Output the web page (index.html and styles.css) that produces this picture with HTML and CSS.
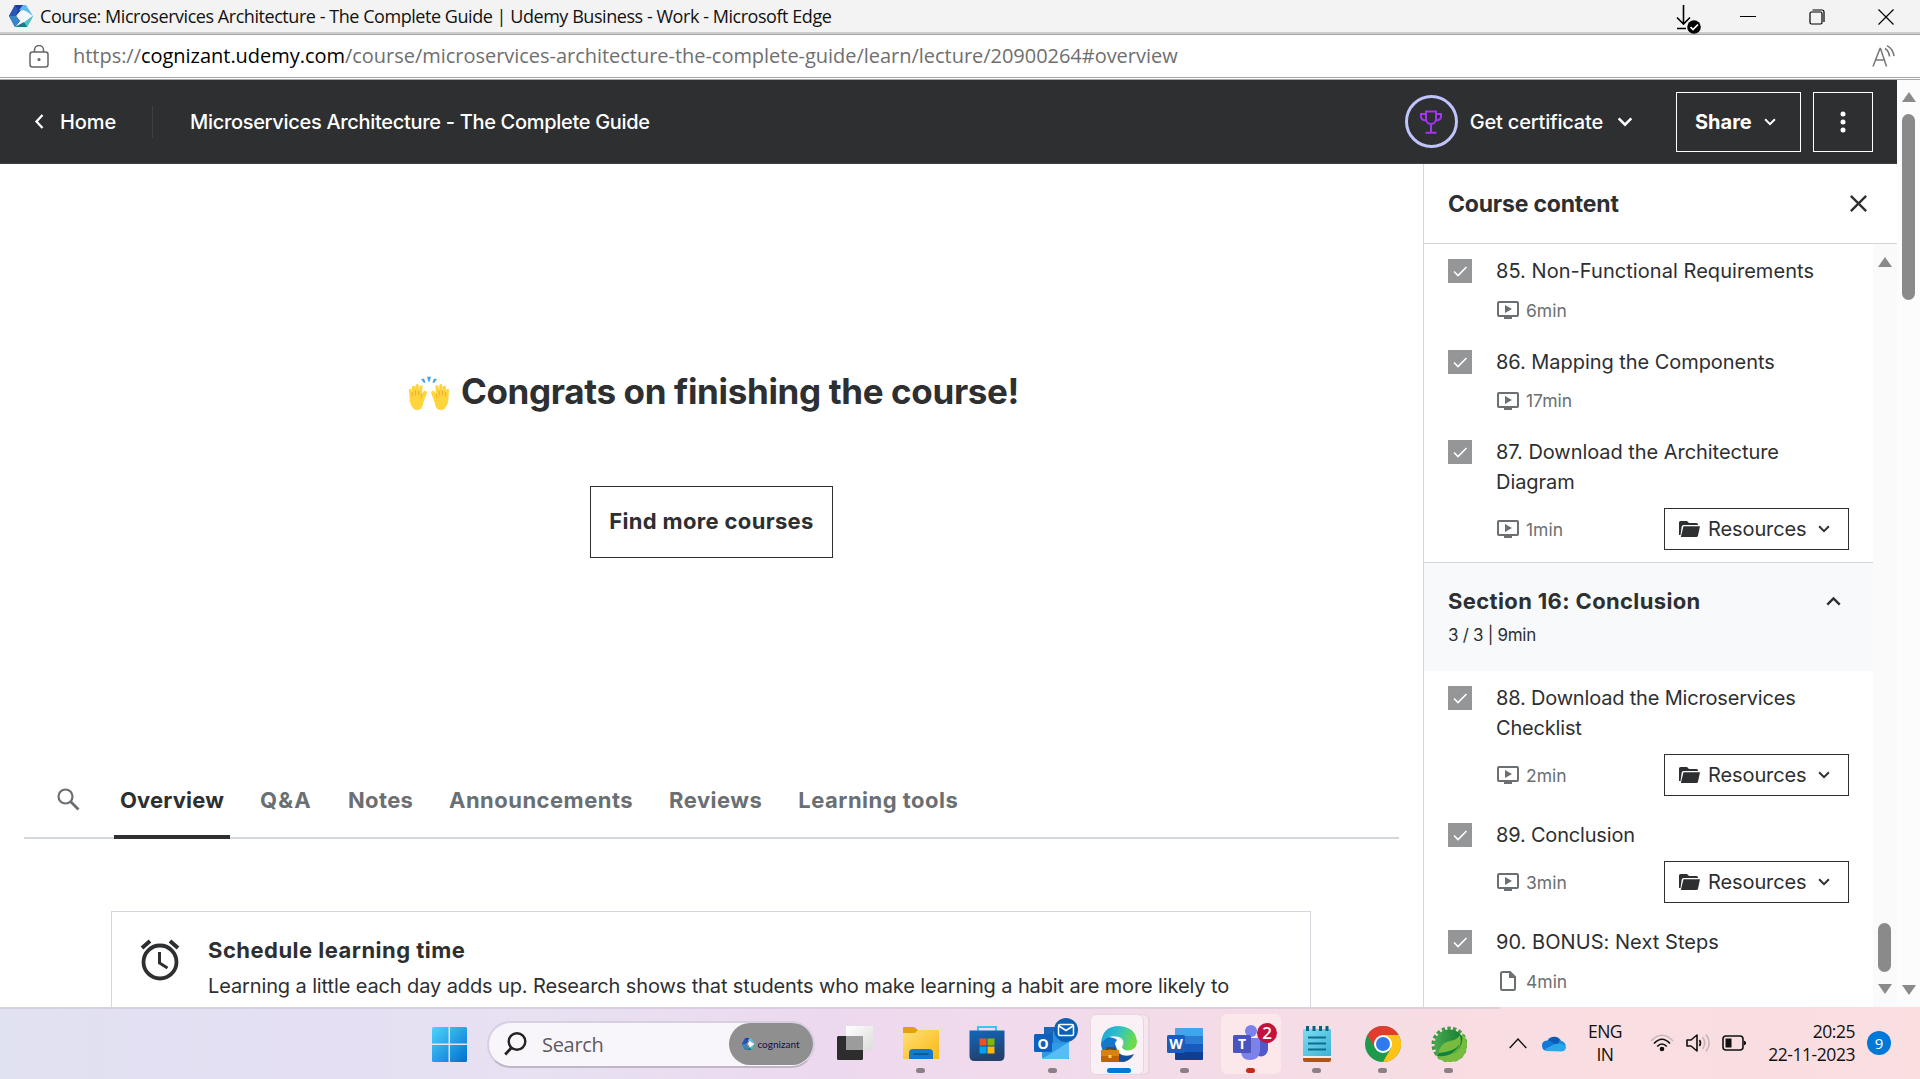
FILE: index.html
```html
<!DOCTYPE html>
<html lang="en">
<head>
<meta charset="utf-8">
<title>Course: Microservices Architecture - The Complete Guide | Udemy Business</title>
<link rel="stylesheet" href="styles.css">
</head>
<body>
<svg class="defs" width="0" height="0">
  <defs>
    <linearGradient id="winG" x1="0" y1="0" x2="1" y2="1"><stop offset="0" stop-color="#4fd3fc"/><stop offset="1" stop-color="#0070cf"/></linearGradient>
    <linearGradient id="folderG" x1="0" y1="0" x2="1" y2="1"><stop offset="0" stop-color="#ffe07a"/><stop offset="1" stop-color="#f9b80e"/></linearGradient>
    <linearGradient id="storeG" x1="0" y1="0" x2="0.3" y2="1"><stop offset="0" stop-color="#1068bd"/><stop offset="1" stop-color="#24406c"/></linearGradient>
    <linearGradient id="edgeTop" x1="0" y1="0" x2="1" y2="0.3"><stop offset="0" stop-color="#1ba0da"/><stop offset=".5" stop-color="#2fc0c8"/><stop offset="1" stop-color="#6cdc4c"/></linearGradient>
    <linearGradient id="springG" x1="0" y1="0" x2="1" y2="0"><stop offset="0" stop-color="#4ba84f"/><stop offset="1" stop-color="#0f7a2e"/></linearGradient>
    <linearGradient id="viewG" x1="0" y1="0" x2="1" y2="1"><stop offset="0" stop-color="#fff"/><stop offset="1" stop-color="#dcdcdc"/></linearGradient>
    <linearGradient id="padG" x1="0" y1="0" x2="1" y2="1"><stop offset="0" stop-color="#7ddcf2"/><stop offset="1" stop-color="#3fb2d2"/></linearGradient>
    <symbol id="play" viewBox="0 0 22 18"><rect x="1" y="1" width="20" height="14" rx="1" fill="none" stroke="#6a6f73" stroke-width="2"/><path d="M8 4v8l7-4zM7 15h8v3H7z" fill="#6a6f73"/></symbol>
    <symbol id="file" viewBox="0 0 16 20"><path d="M2.500 1h7.500l5 5v11.500a1.500 1.500 0 0 1-1.500 1.500h-11a1.500 1.500 0 0 1-1.500-1.500v-15A1.500 1.500 0 0 1 2.500 1z" fill="none" stroke="#6a6f73" stroke-width="2"/><path d="M9 1v6h6z" fill="#6a6f73"/></symbol>
    <symbol id="folder" viewBox="0 0 21 16"><path d="M0 14V1.500Q0 0 1.500 0H8l2 2h7.500Q19 2 19 3.500V4H4.500Q3 4 2.700 5.500L1.500 14z" fill="#2d2f31"/><path d="M4.500 5.200H21L19 14.500Q18.600 16 17.500 16H1.800z" fill="#2d2f31"/></symbol>
    <symbol id="down" viewBox="0 0 14 9"><path d="M1.300 1.300 7 7l5.700-5.700" fill="none" stroke="currentColor" stroke-width="2.300"/></symbol>
    <symbol id="tick" viewBox="0 0 24 24"><path d="m6 12.500 4 4L18.500 8" fill="none" stroke="#fff" stroke-width="1.600"/></symbol>
    <symbol id="gem" viewBox="0 0 24 22"><path d="M6 0h11L6 11z" fill="#4a9fe0"/><path d="M6 0 0 11l6 11 5-6-4-5 9-11z" fill="#1e3a9c"/><path d="M0 11 6 0l3 5-2 6z" fill="#2a56b8"/><path d="M0 11h7l4 5-5 6z" fill="#3686c8"/><path d="M6 22h12l6-11-9 6z" fill="#177b8c"/><path d="m17 0 7 11-7-5-7-1 4-5z" fill="#5dbbe8"/><path d="m24 11-6 11-3-5z" fill="#4ec4c8"/><path d="m14 5 9 6-8 6.500-4-6.500z" fill="#f3f8fc"/></symbol>
    <symbol id="hand" viewBox="0 0 20 42"><path d="M5 41Q0 35 .5 26L0 17q.5-2 2.500-1L3 20V13q1.500-2 3 0l.5 5V11q1.500-2 3.200 0v7l1-6q2-1.500 3 .5L13 22q2-5 4-3.500 1.500 1 .5 4L14.500 32q-.5 6-3 9-3.500 2-6.500 0z" fill="#ffd43c"/><path d="M3.200 20v5M6.400 18v6M9.800 18v6M13 22l-1 5" fill="none" stroke="#efa32c"/></symbol>
  </defs>
</svg>

<div class="titlebar">
  <svg class="gem" width="24" height="22"><use href="#gem"/></svg>
  <span class="window-title">Course: Microservices Architecture - The Complete Guide | Udemy Business - Work - Microsoft Edge</span>
  <div class="window-controls">
    <svg width="25" height="30" viewBox="0 0 25 30"><path d="M7.500 0v19M1 12.500l6.500 6.500 6.500-6.500M1 23.500h9" fill="none" stroke="#000" stroke-width="1.600"/><circle cx="18" cy="22" r="6.800"/><path d="m14.500 22 2.500 2.500 5-5" fill="none" stroke="#fff" stroke-width="1.700"/></svg>
    <svg width="16" height="16" viewBox="0 0 16 16"><path d="M0 7.500h16" stroke="#000"/></svg>
    <svg width="16" height="16" viewBox="0 0 16 16"><rect x="1" y="3" width="12" height="12" rx="1.500" fill="none" stroke="#000" stroke-width="1.200"/><path d="M3.500 1h9.500a2 2 0 0 1 2 2v10" fill="none" stroke="#000" stroke-width="1.200"/></svg>
    <svg width="16" height="16" viewBox="0 0 16 16"><path d="m.5.500 15 15m0-15-15 15" stroke="#000" stroke-width="1.200"/></svg>
  </div>
</div>

<div class="urlbar">
  <svg class="lock" width="20" height="23" viewBox="0 0 20 23"><path d="M5.500 7V5a4.500 4.500 0 0 1 9 0v2" fill="none" stroke="#666" stroke-width="1.500"/><rect x="1" y="7" width="18" height="15" rx="2.500" fill="none" stroke="#666" stroke-width="1.500"/><circle cx="10" cy="14.500" r="1.600" fill="#666"/></svg>
  <span class="url">https://<b>cognizant.udemy.com</b>/course/microservices-architecture-the-complete-guide/learn/lecture/20900264#overview</span>
  <svg class="read" width="23" height="22" viewBox="0 0 23 22"><path d="m1 21.500 7-18h.500l6 18M3.500 15h9M13 3.500q4 2.500 4.500 8M15 .7q6 3.300 7 10.500" fill="none" stroke="#777" stroke-width="1.500"/></svg>
</div>

<div class="viewport">
  <div class="app">
    <header class="topbar">
      <a class="home"><svg width="10" height="15" viewBox="0 0 10 15"><path d="M8.500 1 2.500 7.500l6 6.500" fill="none" stroke="#fff" stroke-width="2.300"/></svg>Home</a>
      <span class="course-name">Microservices Architecture - The Complete Guide</span>
      <div class="certificate">
        <span class="ring"><svg width="24" height="24" viewBox="0 0 24 24" fill="none" stroke="#a435f0" stroke-width="2"><path d="M7 1.500h10v7.500a5 5 0 0 1-10 0zM7 4H2v2.500Q2 10 7 10.500M17 4h5v2.500q0 3.500-5 4M12 14v8.500M6.500 22.800h11"/></svg></span>
        <span class="cert-text">Get certificate</span>
        <svg width="16" height="10"><use href="#down"/></svg>
      </div>
      <div class="share">Share<svg width="12" height="8"><use href="#down"/></svg></div>
      <div class="more"><svg width="6" height="22" viewBox="0 0 6 22" fill="#fff"><circle cx="3" cy="3" r="2.500"/><circle cx="3" cy="11" r="2.500"/><circle cx="3" cy="19" r="2.500"/></svg></div>
    </header>
    <div class="columns">
      <main>
        <section class="congrats">
          <h1><svg width="40" height="34" viewBox="0 0 40 42" preserveAspectRatio="none"><use href="#hand" width="20" height="42"/><use href="#hand" width="20" height="42" transform="matrix(-1 0 0 1 40 0)"/><path d="M18 1h4l-1.500 6h-1zM12 4l3-1 1.500 5-1.500.5zM28 4l-3-1-1.500 5 1.500.5z" fill="#4aa3e8"/></svg>Congrats on finishing the course!</h1>
          <a class="find">Find more courses</a>
        </section>
        <nav class="tabs">
          <svg class="tab-search" width="23" height="23" viewBox="0 0 23 23"><circle cx="8.500" cy="8.500" r="7" fill="none" stroke="#6a6f73" stroke-width="2.200"/><path d="m13.500 13.500 8 8" stroke="#6a6f73" stroke-width="2.800"/></svg>
          <a class="tab active">Overview</a><a class="tab qa">Q&amp;A</a><a class="tab notes">Notes</a><a class="tab">Announcements</a><a class="tab">Reviews</a><a class="tab">Learning tools</a>
        </nav>
        <section class="schedule">
          <svg width="40" height="42" viewBox="0 0 40 42" fill="none" stroke="#2d2f31"><circle cx="20" cy="23" r="16.500" stroke-width="3.800"/><path d="M19.500 13v11l8 5" stroke-width="3"/><path d="m2 9 8-7M38 9l-8-7" stroke-width="4"/></svg>
          <div><h2>Schedule learning time</h2><p>Learning a little each day adds up. Research shows that students who make learning a habit are more likely to</p></div>
        </section>
      </main>
      <aside>
        <div class="aside-head"><h2>Course content</h2><svg width="17" height="17" viewBox="0 0 16 16"><path d="m.8.800 14.400 14.400m0-14.400L.8 15.200" stroke="#2d2f31" stroke-width="2.200"/></svg></div>
        <div class="scroller">
          <div class="lectures">
            <div class="item"><svg class="check"><use href="#tick"/></svg><div class="body"><div class="name">85. Non-Functional Requirements</div><div class="meta"><svg width="22" height="18"><use href="#play"/></svg>6min</div></div></div>
            <div class="item"><svg class="check"><use href="#tick"/></svg><div class="body"><div class="name n86">86. Mapping the Components</div><div class="meta"><svg width="22" height="18"><use href="#play"/></svg>17min</div></div></div>
            <div class="item"><svg class="check"><use href="#tick"/></svg><div class="body"><div class="name n86">87. Download the Architecture<br>Diagram</div><div class="meta tall"><svg width="22" height="18"><use href="#play"/></svg>1min<span class="res"><svg width="21" height="16"><use href="#folder"/></svg>Resources<svg class="caret" width="12" height="8"><use href="#down"/></svg></span></div></div></div>
            <div class="section"><div class="section-title">Section 16: Conclusion<svg width="15" height="10" viewBox="0 0 15 10"><path d="m1.300 8.700 6.200-6.200 6.200 6.200" fill="none" stroke="#2d2f31" stroke-width="2.400"/></svg></div><div class="section-sub">3 / 3 | 9min</div></div>
            <div class="item"><svg class="check"><use href="#tick"/></svg><div class="body"><div class="name n88">88. Download the Microservices<br>Checklist</div><div class="meta tall"><svg width="22" height="18"><use href="#play"/></svg>2min<span class="res"><svg width="21" height="16"><use href="#folder"/></svg>Resources<svg class="caret" width="12" height="8"><use href="#down"/></svg></span></div></div></div>
            <div class="item"><svg class="check"><use href="#tick"/></svg><div class="body"><div class="name n88">89. Conclusion</div><div class="meta tall"><svg width="22" height="18"><use href="#play"/></svg>3min<span class="res"><svg width="21" height="16"><use href="#folder"/></svg>Resources<svg class="caret" width="12" height="8"><use href="#down"/></svg></span></div></div></div>
            <div class="item"><svg class="check"><use href="#tick"/></svg><div class="body"><div class="name">90. BONUS: Next Steps</div><div class="meta"><svg width="22" height="20"><use href="#file"/></svg>4min</div></div></div>
          </div>
          <div class="bar inner"><i class="up"></i><i class="thumb"></i><i class="dn"></i></div>
        </div>
      </aside>
    </div>
  </div>
  <div class="bar outer"><i class="up"></i><i class="thumb"></i><i class="dn"></i></div>
</div>

<footer class="taskbar">
  <svg class="start" width="35" height="35" viewBox="0 0 35 35" fill="url(#winG)"><path d="M1.500 0H16.500V16.500H0V1.500Q0 0 1.500 0zM18 0h15.500Q35 0 35 1.500v15H18zM0 18h16.500v17h-15Q0 35 0 33.500zM18 18h17v15.500q0 1.500-1.500 1.500H18z"/></svg>
  <div class="search"><svg width="23" height="24" viewBox="0 0 23 24"><circle cx="13" cy="9.500" r="8.300" fill="none" stroke="#222" stroke-width="2.400"/><path d="m7.200 16-6 6.500" stroke="#222" stroke-width="2.800"/></svg><span class="hint">Search</span><span class="brand"><svg width="13" height="12" viewBox="0 0 24 22"><use href="#gem"/></svg>cognizant</span></div>
  <div class="apps">
    <div class="task"><svg width="36" height="36" viewBox="0 0 36 36"><path d="M1 10h25v22.500q0 1.500-1.500 1.500H1.500Q0 34 0 32.500V11z" fill="#2d2d2d"/><path d="M9 0h27v22.500q0 1.500-1.500 1.500H9z" fill="url(#viewG)"/><path d="M9 10h17v14H9z" fill="#9c9c9c"/></svg></div>
    <div class="task run"><svg width="36" height="36" viewBox="0 0 36 36"><path d="M0 8V2Q0 1 1 1h10l4 3v5z" fill="#e2a106"/><path d="M0 7h12l3-3h20q1 0 1 1v28H0z" fill="url(#folderG)"/><path d="M6 33v-6q0-4 4-4h16q4 0 4 4v6z" fill="#1579cf"/><path d="M10.500 28h15" stroke="#0b4f93" stroke-width="1.600"/></svg></div>
    <div class="task"><svg width="36" height="36" viewBox="0 0 36 36"><path d="M9 5V1h18v4" fill="none" stroke="#42c3f5" stroke-width="2"/><path d="M.5 4.500h35V30q0 5-5 5h-25q-5 0-5-5z" fill="url(#storeG)"/><path d="M10.500 12.500h7v7h-7z" fill="#f25022"/><path d="M18.500 12.500h7v7h-7z" fill="#7fba00"/><path d="M10.500 20.500h7v7h-7z" fill="#00a4ef"/><path d="M18.500 20.500h7v7h-7z" fill="#ffb900"/></svg></div>
    <div class="task run"><svg width="44" height="44" viewBox="0 0 44 44"><path d="M10 9h22v17H10z" fill="#1b66b8"/><path d="M19 13h16v14H19z" fill="#2a90dc"/><path d="M8 25h27v16H10q-2 0-2-2z" fill="#2f9be6"/><path d="m8 41 27-17v15q0 2-2 2z" fill="#58bcf5"/><rect y="16" width="18" height="18" rx="1.500" fill="#0f5fbe"/><text x="9" y="30.500" text-anchor="middle" class="letter">O</text><circle cx="32" cy="12" r="12" fill="#0b62b5"/><rect x="24.500" y="6.500" width="15" height="11" rx="1.500" fill="none" stroke="#fff" stroke-width="1.500"/><path d="m25 8 7 4.500L39 8" fill="none" stroke="#fff" stroke-width="1.500"/></svg></div>
    <div class="task run current"><svg width="36" height="36" viewBox="0 0 36 36"><path d="M0 19Q1 8 12 12q5 1 6 6-4 8 2 14l2 3.700Q4 38 0 19z" fill="#1477cc"/><path d="M14 17q-1 8 7 12 6 2 12-1-3 6-10 8-9 0-11-8z" fill="#15509e"/><path d="M0 18Q1 0 18 0q17 1 18 16-.5 8-9 8.500-5 0-6-3 4-8-3-10.500Q6 8 0 18z" fill="url(#edgeTop)"/><path d="M14 18q1-5 5-4 4 2 1.500 7 3 6 12.500 4-2 4-7 4-9 0-12-11z" fill="#fff"/><rect y="24" width="18" height="12" rx="1" fill="#bb6505"/><path d="M0 24h18v6H0z" fill="#d78311"/><path d="M6 24v-2h6v2" fill="none" stroke="#753d05" stroke-width="1.500"/><path d="M7.500 29h3v3h-3z" fill="#ffd84e"/></svg></div>
    <div class="task run"><svg width="36" height="34" viewBox="0 0 36 34"><path d="M8 9V2q0-1 1-1h26q1 0 1 1v7z" fill="#41a5ee"/><path d="M8 9h28v8H8z" fill="#2b7cd3"/><path d="M8 17h28v8H8z" fill="#185abd"/><path d="M8 25h28v7q0 1-1 1H9q-1 0-1-1z" fill="#103f91"/><rect y="8" width="18" height="18" rx="1.500" fill="#1a5dbe"/><text x="9" y="22" text-anchor="middle" class="letter">W</text></svg></div>
    <div class="task run teams"><svg width="44" height="42" viewBox="0 0 44 42"><circle cx="18" cy="11" r="6" fill="#7b83eb"/><path d="M22 18h13v12q-2 8-10 6z" fill="#5059c9"/><path d="M8 18h19v13q-1 9-10 9t-9-9z" fill="#7b83eb"/><rect y="15" width="18" height="18" rx="1.500" fill="#4b53bc"/><text x="9" y="29" text-anchor="middle" class="letter">T</text><circle cx="34" cy="13" r="10" fill="#c4123c"/><text x="34" y="19" text-anchor="middle" class="count">2</text></svg></div>
    <div class="task run"><svg width="28" height="36" viewBox="0 0 28 36"><path d="M0 31h28v3q0 2-2 2H2q-2 0-2-2z" fill="#b35415"/><path d="M0 28h28v4H0z" fill="#eee"/><path d="M0 4q0-1 1-1h26q1 0 1 1v26H0z" fill="url(#padG)"/><path d="M5 11.500h18M5 17.500h18M5 23.500h18" stroke="#08708f" stroke-width="2"/><path d="M4.500 0v5M11 0v5M17.500 0v5M24 0v5" stroke="#08607f" stroke-width="3"/></svg></div>
    <div class="task run"><svg width="36" height="36" viewBox="0 0 36 36"><circle cx="18" cy="18" r="18" fill="#1f9a4c"/><path d="M2.400 9A18 18 0 0 1 33.600 9H18l-7.800 13.500z" fill="#e33b2e"/><path d="M33.600 9A18 18 0 0 1 18 36l7.800-13.500L18 9z" fill="#fdc317"/><circle cx="18" cy="18" r="9" fill="#fff"/><circle cx="18" cy="18" r="7" fill="#2f7bee"/></svg></div>
    <div class="task run"><svg width="36" height="36" viewBox="0 0 36 36"><circle cx="18.500" cy="18.500" r="16" fill="none" stroke="#3d9a45" stroke-width="4" stroke-dasharray="3.300 2.300"/><circle cx="18.500" cy="18.500" r="15" fill="url(#springG)"/><path d="M31 7q5 5 5 12-1 16-17 17-9 0-13-6 12 1 19-4 8-7 6-19z" fill="#77bc3f"/><path d="M29 9q3 12-6 18-7 4-16 3Q8 17 19 15q7-1 10-6z" fill="#77bc3f"/><path d="M5 30q17 2 24-12-6 8-21 9" fill="#12803a"/></svg></div>
  </div>
  <div class="tray">
    <svg class="t-up" width="18" height="12" viewBox="0 0 18 12"><path d="m.7 11 8.300-9 8.300 9" fill="none" stroke="#111" stroke-width="1.400"/></svg>
    <svg class="t-cloud" width="24" height="17" viewBox="0 0 24 17"><path d="M5 7a7.500 7.500 0 0 1 14-1l-5 6z" fill="#0a5cb5"/><path d="M5.500 16Q0 15.500 0 10.500T6 5.500q3 0 7 4z" fill="#1079d4"/><path d="M17 5.500q6 0 7 6l-7-1z" fill="#1590df"/><path d="M5.500 16Q4 15.500 3 14l10-5q7-2 11 3 0 4-4.500 4.500z" fill="#28a8ea"/></svg>
    <div class="t-lang">ENG<br>IN</div>
    <svg class="t-wifi" width="24" height="18" viewBox="0 0 24 18" fill="none" stroke-width="1.700"><path d="M1 7Q12-4.500 23 7" stroke="#c9b5b9"/><path d="M4 9.500q8-8.500 16 0M7.200 12.500q4.800-5 9.600 0" stroke="#111"/><circle cx="12" cy="15" r="2.300" fill="#111"/></svg>
    <svg class="t-vol" width="25" height="20" viewBox="0 0 25 20" fill="none" stroke-width="1.600"><path d="M1 7h4l6-5v16l-6-5H1z" stroke="#111" stroke-linejoin="round"/><path d="M13.500 7q2 3 0 6" stroke="#111"/><path d="M16.500 4q4.500 6 0 12M20 1.500q6.500 8.500 0 17" stroke="#c9b5b9"/></svg>
    <svg class="t-bat" width="24" height="16" viewBox="0 0 24 16"><rect x="1" y="1" width="20" height="14" rx="3" fill="none" stroke="#111" stroke-width="1.600"/><path d="M3.500 3.500h6v9h-6zM22 5.500l2 1.500v2l-2 1.500z" fill="#111"/></svg>
    <div class="t-time">20:25<br>22-11-2023</div>
    <div class="t-badge">9</div>
  </div>
</footer>
</body>
</html>
```
FILE: styles.css
```css
* { box-sizing: border-box; }
body { margin: 0; width: 1920px; height: 1079px; overflow: hidden; display: flex; flex-direction: column; background: #fff; font-family: Inter, "Liberation Sans", sans-serif; color: #2d2f31; }
h1, h2, p { margin: 0; }
svg { flex: none; display: block; }
.defs { position: absolute; }

/* Browser window chrome */
.titlebar { flex: none; height: 35px; display: flex; align-items: flex-start; padding: 5px 9px 0; background: #f3f3f3; border-bottom: 1px solid #a5a5a5; box-shadow: inset 0 -2px #cdcdcd; font: 18px/24px "Open Sans", "Noto Sans", sans-serif; color: #111; }
.window-title { margin: -1px 0 0 7px; letter-spacing: -.45px; white-space: nowrap; }
.window-controls { margin-left: auto; display: flex; gap: 53px; padding-right: 17px; }
.window-controls svg { margin-top: 4px; }
.window-controls svg:first-child { margin: 0 -14px 0 0; }
.urlbar { flex: none; height: 45px; display: flex; align-items: center; padding: 0 25px 0 29px; border-bottom: 3px double #a8a8a8; font: 20px/28px "Open Sans", "Noto Sans", sans-serif; color: #6f6f6f; }
.url { margin-left: 24px; letter-spacing: -.03px; white-space: nowrap; }
.url b { font-weight: 400; color: #000; }
.read { margin-left: auto; }

/* Page */
.viewport { flex: none; height: 927px; display: flex; }
.app { width: 1897px; display: flex; flex-direction: column; }
.topbar { flex: none; height: 84px; display: flex; align-items: center; padding: 0 24px 0 34px; background: #2d2f31; border-bottom: 1px solid #3e4143; color: #fff; font-size: 20px; font-weight: 500; }
.home { display: flex; align-items: center; gap: 16px; width: 119px; height: 32px; border-right: 1px solid #3e4143; letter-spacing: -.1px; }
.course-name { margin-left: 37px; letter-spacing: -.31px; }
.certificate { margin-left: auto; display: flex; align-items: center; letter-spacing: -.2px; }
.cert-text { margin: 0 14px 0 12px; }
.ring { width: 53px; height: 53px; border: 3px solid #c0c4fc; border-radius: 50%; display: flex; align-items: center; justify-content: center; }
.share, .more { height: 60px; margin-top: 1px; border: 1px solid #fff; display: flex; align-items: center; }
.share { width: 125px; margin-left: 43px; padding-left: 18px; gap: 12px; font-weight: 700; }
.more { width: 60px; margin-left: 12px; justify-content: center; }
.columns { flex: 1; min-height: 0; display: flex; }
main { width: 1423px; padding-left: 24px; padding-right: 24px; overflow: hidden; }
.congrats { height: 589px; display: flex; flex-direction: column; align-items: center; padding-top: 203px; }
.congrats h1 { display: flex; align-items: center; gap: 12px; padding-left: 5px; font-size: 35px; line-height: 48px; letter-spacing: -.35px; white-space: nowrap; }
.congrats h1 svg { margin-top: 3px; }
.find { margin-top: 71px; width: 243px; height: 72px; border: 1px solid #2d2f31; display: flex; align-items: center; justify-content: center; font-size: 22px; font-weight: 700; letter-spacing: .33px; padding-bottom: 3px; }
.tabs { height: 86px; display: flex; align-items: stretch; padding-left: 33px; border-bottom: 2px solid #d1d7dc; font-size: 22px; font-weight: 700; color: #6a6f73; margin-top: 0; }
.tab-search { margin: 35px 34px 0 0; }
.tab { padding: 33px 6px 0; margin-right: 24px; line-height: 28px; letter-spacing: .48px; white-space: nowrap; }
.tab.active { color: #2d2f31; border-bottom: 4px solid #2d2f31; margin-bottom: -2px; width: 116px; letter-spacing: .15px; }
.tab.qa { width: 64px; letter-spacing: 1.200px; }
.tab.notes { width: 77px; letter-spacing: .35px; }
.schedule { width: 1200px; height: 200px; margin: 72px 0 0 87px; border: 1px solid #d1d7dc; display: flex; gap: 28px; padding: 27px 28px; }
.schedule h2 { font-size: 22px; line-height: 28px; letter-spacing: .48px; margin-top: -3px; }
.schedule p { margin-top: 8px; font-size: 20px; line-height: 28px; letter-spacing: -.12px; white-space: nowrap; }

/* Course content sidebar */
aside { width: 474px; border-left: 1px solid #d1d7dc; display: flex; flex-direction: column; }
.aside-head { flex: none; height: 80px; display: flex; justify-content: space-between; align-items: center; padding: 0 30px 0 24px; border-bottom: 1px solid #d1d7dc; }
.aside-head h2 { font-size: 23px; letter-spacing: -.2px; }
.scroller { flex: 1; min-height: 0; display: flex; }
.lectures { width: 449px; overflow: hidden; }
.item { display: flex; padding: 12px 24px; }
.check { width: 24px; height: 24px; margin-top: 3px; background: #959698; }
.body { flex: 1; margin-left: 24px; }
.name { font-size: 20px; line-height: 30px; letter-spacing: .05px; white-space: nowrap; }
.n86 { letter-spacing: -.05px; }
.n88 { letter-spacing: -.18px; }
.meta { display: flex; align-items: center; height: 24.500px; margin-top: 12px; padding-left: 1px; gap: 7px; font-size: 17.500px; color: #6a6f73; }
.meta.tall { height: 42px; margin-top: 11px; }
.res { margin-left: auto; width: 185px; height: 42px; border: 1px solid #2d2f31; padding-left: 14px; display: flex; align-items: center; gap: 8px; font-size: 20px; letter-spacing: -.1px; color: #2d2f31; }
.caret { margin-left: 3px; }
.section { height: 109px; padding: 23px 24px 0; background: #f7f9fa; border-top: 1px solid #d1d7dc; }
.section-title { display: flex; justify-content: space-between; align-items: center; padding-right: 8px; font-size: 22px; line-height: 30px; font-weight: 700; letter-spacing: .36px; }
.section-sub { margin-top: 7px; font-size: 17px; line-height: 24px; letter-spacing: -.3px; }

/* Scrollbars */
.bar { display: flex; flex-direction: column; align-items: center; background: #fafafa; }
.bar .up { border: 7px solid transparent; border-top: 0; border-bottom: 10px solid #8a8a8a; }
.bar .dn { border: 7px solid transparent; border-bottom: 0; border-top: 10px solid #8a8a8a; }
.bar .thumb { width: 13px; border-radius: 7px; background: #8a8a8a; }
.inner { width: 24px; padding: 13px 1px 0 0; }
.inner .thumb { height: 49px; margin: 656px 0 12px; }
.outer { width: 23px; padding: 12px 0 0; background: #fcfcfc; }
.outer .thumb { height: 186px; margin: 12px 0 685px; }

/* Taskbar */
.taskbar { flex: none; height: 72px; display: flex; align-items: center; padding: 2px 29px 0 432px; background: linear-gradient(#cabfd080, #cabfd080) 0 0 / 1500px 2px no-repeat, linear-gradient(90deg, #e0e1f1, #e5dff3 18%, #e7e1f2 28%, #edd9ef 43%, #f3dbe8 60%, #f8dde2 78%, #fadfe1); font-family: "Open Sans", "Noto Sans", sans-serif; }
.search { width: 328px; height: 47px; margin-left: 20px; border: 2px solid #d8cfe2; border-bottom-color: #c1b5c8; border-radius: 24px; background: #f8f5fb; display: flex; align-items: center; padding: 0 0 0 15px; }
.hint { margin-left: 15px; font-size: 20px; letter-spacing: -.3px; color: #5d5a60; }
.brand { margin-left: auto; width: 84px; height: 42px; border-radius: 21px; background: #8f8f8f; display: flex; align-items: center; justify-content: center; gap: 2px; font: 10px Lato, sans-serif; color: #120d50; }
.apps { display: flex; margin-left: 6.500px; }
.task { position: relative; width: 66px; height: 60px; display: flex; align-items: center; justify-content: center; }
.task svg { position: relative; }
.run::after { content: ""; position: absolute; left: 28px; bottom: 1px; width: 9px; height: 5px; border-radius: 3px; background: #8a7f86; }
.current::before { content: ""; position: absolute; left: 4px; top: 0; width: 52px; height: 59px; border-radius: 6px; border: 1px solid #e6d6e0; background: #fbf0f6; box-shadow: 5px 0 0 -1px #f7e6ef, 6px 0 #e6d6e0; }
.current::after { left: 21px; width: 24px; background: #0078d7; }
.teams::before { content: ""; position: absolute; left: 3px; top: 0; width: 60px; height: 60px; border-radius: 6px; background: #fce7ea; }
.teams::after { background: #c42b1c; }
.task:nth-child(4) svg { top: -4px; left: 3px; }
.task:nth-child(7) svg { top: -3px; left: 4px; }
.letter { font: 700 14px "Open Sans", sans-serif; fill: #fff; }
.count { font: 600 17px "Open Sans", sans-serif; fill: #fff; }
.tray { margin-left: auto; display: flex; align-items: center; padding-bottom: 2px; color: #111; font-size: 17.500px; line-height: 23px; }
.t-cloud { margin-left: 15px; }
.t-lang { width: 50px; margin-left: 14px; text-align: center; letter-spacing: -.6px; }
.t-wifi { margin-left: 20px; }
.t-vol { margin-left: 12px; }
.t-bat { margin-left: 11px; }
.t-time { width: 92px; margin-left: 17px; text-align: right; letter-spacing: -.45px; white-space: nowrap; }
.t-badge { width: 24px; height: 24px; margin-left: 12px; border-radius: 50%; background: #0078d7; color: #fff; font-size: 15px; text-align: center; line-height: 24px; }
```
